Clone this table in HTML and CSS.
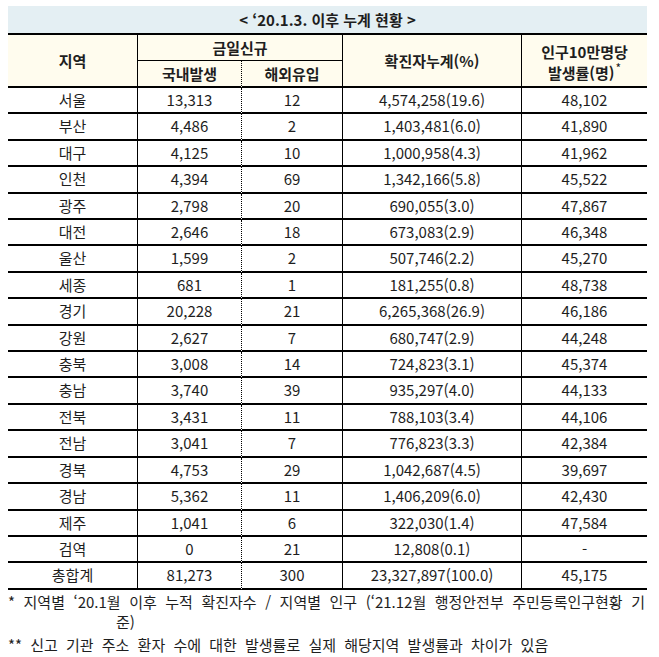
FILE: index.html
```html
<!DOCTYPE html>
<html lang="ko">
<head>
<meta charset="utf-8">
<title>'20.1.3. 이후 누계 현황</title>
<link rel="stylesheet" href="styles.css">
</head>
<body>
<div class="sheet">
  <div class="title">&lt; ‘20.1.3. 이후 누계 현황 &gt;</div>
  <table class="grid">
    <colgroup>
      <col class="c-region">
      <col class="c-dom">
      <col class="c-ovs">
      <col class="c-cum">
      <col class="c-rate">
    </colgroup>
    <thead>
      <tr class="h1">
        <th rowspan="2" class="vr span">지역</th>
        <th colspan="2" class="vr sub">금일신규</th>
        <th rowspan="2" class="vr span">확진자누계(%)</th>
        <th rowspan="2" class="span two">인구10만명당<br>발생률(명)<span class="ast">*</span></th>
      </tr>
      <tr class="h2">
        <th class="dot">국내발생</th>
        <th class="vr">해외유입</th>
      </tr>
    </thead>
    <tbody>
      <tr><td class="vr">서울</td><td class="dot">13,313</td><td class="vr">12</td><td class="vr">4,574,258(19.6)</td><td>48,102</td></tr>
      <tr><td class="vr">부산</td><td class="dot">4,486</td><td class="vr">2</td><td class="vr">1,403,481(6.0)</td><td>41,890</td></tr>
      <tr><td class="vr">대구</td><td class="dot">4,125</td><td class="vr">10</td><td class="vr">1,000,958(4.3)</td><td>41,962</td></tr>
      <tr><td class="vr">인천</td><td class="dot">4,394</td><td class="vr">69</td><td class="vr">1,342,166(5.8)</td><td>45,522</td></tr>
      <tr><td class="vr">광주</td><td class="dot">2,798</td><td class="vr">20</td><td class="vr">690,055(3.0)</td><td>47,867</td></tr>
      <tr><td class="vr">대전</td><td class="dot">2,646</td><td class="vr">18</td><td class="vr">673,083(2.9)</td><td>46,348</td></tr>
      <tr><td class="vr">울산</td><td class="dot">1,599</td><td class="vr">2</td><td class="vr">507,746(2.2)</td><td>45,270</td></tr>
      <tr><td class="vr">세종</td><td class="dot">681</td><td class="vr">1</td><td class="vr">181,255(0.8)</td><td>48,738</td></tr>
      <tr><td class="vr">경기</td><td class="dot">20,228</td><td class="vr">21</td><td class="vr">6,265,368(26.9)</td><td>46,186</td></tr>
      <tr><td class="vr">강원</td><td class="dot">2,627</td><td class="vr">7</td><td class="vr">680,747(2.9)</td><td>44,248</td></tr>
      <tr><td class="vr">충북</td><td class="dot">3,008</td><td class="vr">14</td><td class="vr">724,823(3.1)</td><td>45,374</td></tr>
      <tr><td class="vr">충남</td><td class="dot">3,740</td><td class="vr">39</td><td class="vr">935,297(4.0)</td><td>44,133</td></tr>
      <tr><td class="vr">전북</td><td class="dot">3,431</td><td class="vr">11</td><td class="vr">788,103(3.4)</td><td>44,106</td></tr>
      <tr><td class="vr">전남</td><td class="dot">3,041</td><td class="vr">7</td><td class="vr">776,823(3.3)</td><td>42,384</td></tr>
      <tr><td class="vr">경북</td><td class="dot">4,753</td><td class="vr">29</td><td class="vr">1,042,687(4.5)</td><td>39,697</td></tr>
      <tr><td class="vr">경남</td><td class="dot">5,362</td><td class="vr">11</td><td class="vr">1,406,209(6.0)</td><td>42,430</td></tr>
      <tr><td class="vr">제주</td><td class="dot">1,041</td><td class="vr">6</td><td class="vr">322,030(1.4)</td><td>47,584</td></tr>
      <tr><td class="vr">검역</td><td class="dot">0</td><td class="vr">21</td><td class="vr">12,808(0.1)</td><td>-</td></tr>
      <tr><td class="vr">총합계</td><td class="dot">81,273</td><td class="vr">300</td><td class="vr">23,327,897(100.0)</td><td>45,175</td></tr>
    </tbody>
  </table>
  <div class="notes">
    <p class="note just">* 지역별 ‘20.1월 이후 누적 확진자수 / 지역별 인구 (‘21.12월 행정안전부 주민등록인구현황 기</p>
    <p class="note cont">준)</p>
    <p class="note last">** 신고 기관 주소 환자 수에 대한 발생률로 실제 해당지역 발생률과 차이가 있음</p>
  </div>
</div>
</body>
</html>
```
FILE: styles.css
```css
html, body {
  margin: 0;
  padding: 0;
  background: #ffffff;
}

body {
  padding: 6px 12px 0 8px;
  font-family: "Noto Sans CJK KR", "Noto Sans", sans-serif;
  font-size: 15px;
  color: #1e1e1e;
}

.sheet {
  width: 639px;
}

.title {
  height: 27px;
  line-height: 27px;
  background: #e4eff3;
  text-align: center;
  font-weight: bold;
  font-size: 15px;
}

.grid {
  width: 639px;
  border-collapse: separate;
  border-spacing: 0;
  table-layout: fixed;
  border-top: 2px solid #000;
}

.c-region { width: 130px; }
.c-dom { width: 104px; }
.c-ovs { width: 101px; }
.c-cum { width: 179px; }
.c-rate { width: 125px; }

th, td {
  padding: 0;
  text-align: center;
  vertical-align: middle;
  white-space: nowrap;
}

thead th {
  background: #fffcee;
  font-weight: bold;
  line-height: 25px;
}

thead th.sub {
  border-bottom: 1px solid #000;
}

thead .h2 th {
  border-bottom: 2px solid #000;
}

thead th.span {
  border-bottom: 2px solid #000;
}

thead th.two {
  line-height: 21px;
  padding-top: 2px;
}

.ast {
  display: inline-block;
  font-size: 12px;
  line-height: 8px;
  vertical-align: top;
  position: relative;
  top: 2px;
  margin-left: 1px;
  font-weight: normal;
}

tbody td {
  line-height: 24.4px;
  border-bottom: 2px solid #000;
}

.vr {
  border-right: 1px solid #000;
}

.dot {
  border-right: 1px dotted #000;
}

.notes {
  padding-top: 2px;
}

.note {
  margin: 0;
  line-height: 20px;
  font-size: 15px;
  white-space: nowrap;
}

.note.just {
  width: 637px;
  text-align: justify;
  text-align-last: justify;
  white-space: normal;
}

.note.cont {
  padding-left: 108px;
}

.note.last {
  margin-top: 3px;
  word-spacing: 4px;
}
```
